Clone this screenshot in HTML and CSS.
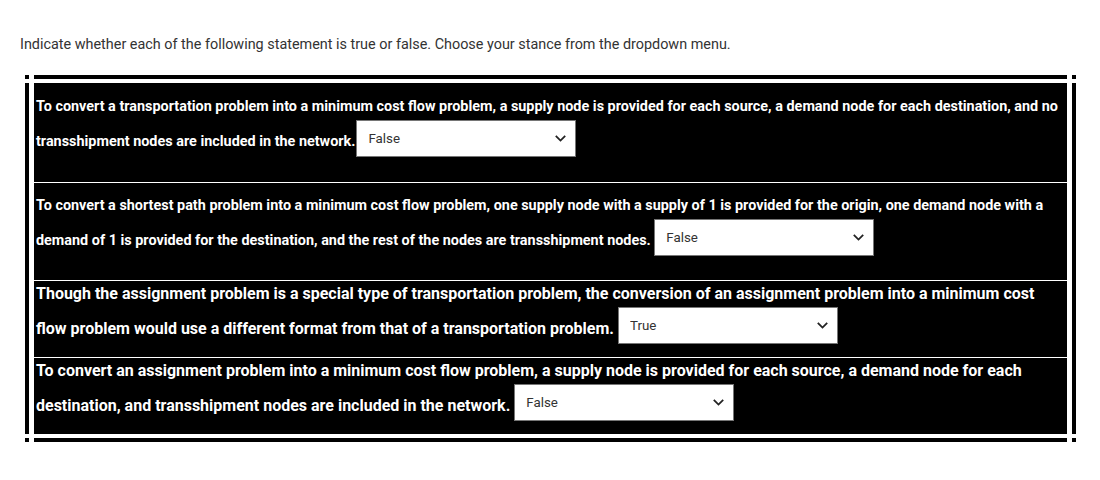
FILE: index.html
```html
<!DOCTYPE html>
<html lang="en">
<head>
<meta charset="utf-8">
<title>True or false</title>
<link rel="stylesheet" href="styles.css">
</head>
<body>
<p class="intro">Indicate whether each of the following statement is true or false. Choose your stance from the dropdown menu.</p>
<div class="frame">
  <div class="corner"></div><div class="bar"></div><div class="corner"></div>
  <div class="bar"></div>
  <div class="content">
    <div class="row row-sm row-first">
      <p>To convert a transportation problem into a minimum cost flow problem, a supply node is provided for each source, a demand node for each destination, and no transshipment nodes are included in the network.<span class="dd"><select><option>False</option><option>True</option></select><svg class="chev" width="11" height="7" viewBox="0 0 11 7"><path d="M0.8 0.9 L5.5 5.6 L10.2 0.9" fill="none" stroke="#222" stroke-width="1.8"/></svg></span></p>
    </div>
    <div class="row row-sm">
      <p>To convert a shortest path problem into a minimum cost flow problem, one supply node with a supply of 1 is provided for the origin, one demand node with a demand of 1 is provided for the destination, and the rest of the nodes are transshipment nodes. <span class="dd"><select><option>False</option><option>True</option></select><svg class="chev" width="11" height="7" viewBox="0 0 11 7"><path d="M0.8 0.9 L5.5 5.6 L10.2 0.9" fill="none" stroke="#222" stroke-width="1.8"/></svg></span></p>
    </div>
    <div class="row row-lg">
      <p>Though the assignment problem is a special type of transportation problem, the conversion of an assignment problem into a minimum cost flow problem would use a different format from that of a transportation problem. <span class="dd"><select><option>True</option><option>False</option></select><svg class="chev" width="11" height="7" viewBox="0 0 11 7"><path d="M0.8 0.9 L5.5 5.6 L10.2 0.9" fill="none" stroke="#222" stroke-width="1.8"/></svg></span></p>
    </div>
    <div class="row row-lg">
      <p>To convert an assignment problem into a minimum cost flow problem, a supply node is provided for each source, a demand node for each destination, and transshipment nodes are included in the network. <span class="dd"><select><option>False</option><option>True</option></select><svg class="chev" width="11" height="7" viewBox="0 0 11 7"><path d="M0.8 0.9 L5.5 5.6 L10.2 0.9" fill="none" stroke="#222" stroke-width="1.8"/></svg></span></p>
    </div>
  </div>
  <div class="bar"></div>
  <div class="corner"></div><div class="bar"></div><div class="corner"></div>
</div>
</body>
</html>
```

FILE: styles.css
```css
html, body {
  margin: 0;
  padding: 0;
  background: #fff;
}

body {
  font-family: Roboto, "Liberation Sans", Arial, sans-serif;
  padding: 0 20px;
}

.intro {
  margin: 36px 0 0;
  font-size: 14.4px;
  line-height: 17px;
  color: #333;
}

.frame {
  margin: 22px 4px 0 5px;
  display: grid;
  grid-template-columns: 4px 1fr 4px;
  grid-template-rows: 4px auto 4px;
  column-gap: 5px;
  row-gap: 4px;
  background: #fff;
}

.corner,
.bar {
  background: #000;
}

.content {
  background: #000;
  color: #fff;
  font-weight: 700;
}

.row {
  border-bottom: 1px solid #fff;
  padding: 0 2px;
}

.row:last-child {
  border-bottom: 0;
}

.row p {
  margin: 0;
  line-height: 26px;
}

.row-sm {
  font-size: 14.4px;
  padding-top: 10px;
  padding-bottom: 24px;
}

.row-first {
  padding-top: 11px;
  padding-bottom: 25px;
}

.row-first .dd {
  margin-left: 1px;
}

.row-sm .dd {
  vertical-align: -11px;
}

.row-lg {
  font-size: 16px;
  padding-top: 0;
  padding-bottom: 13px;
}

.row-lg .dd {
  vertical-align: -10px;
}

.dd {
  display: inline-block;
  position: relative;
  overflow: hidden;
  width: 220px;
  height: 37px;
}

.dd select {
  display: block;
  appearance: none;
  -webkit-appearance: none;
  box-sizing: border-box;
  width: 220px;
  height: 37px;
  margin: 0;
  border: 1px solid #767676;
  border-radius: 0;
  background: #fff;
  padding: 0 30px 0 11px;
  font-family: Roboto, "Liberation Sans", Arial, sans-serif;
  font-size: 13.33px;
  font-weight: 400;
  color: #333;
  outline: none;
}

.chev {
  position: absolute;
  right: 10px;
  top: 15px;
  pointer-events: none;
}
```
